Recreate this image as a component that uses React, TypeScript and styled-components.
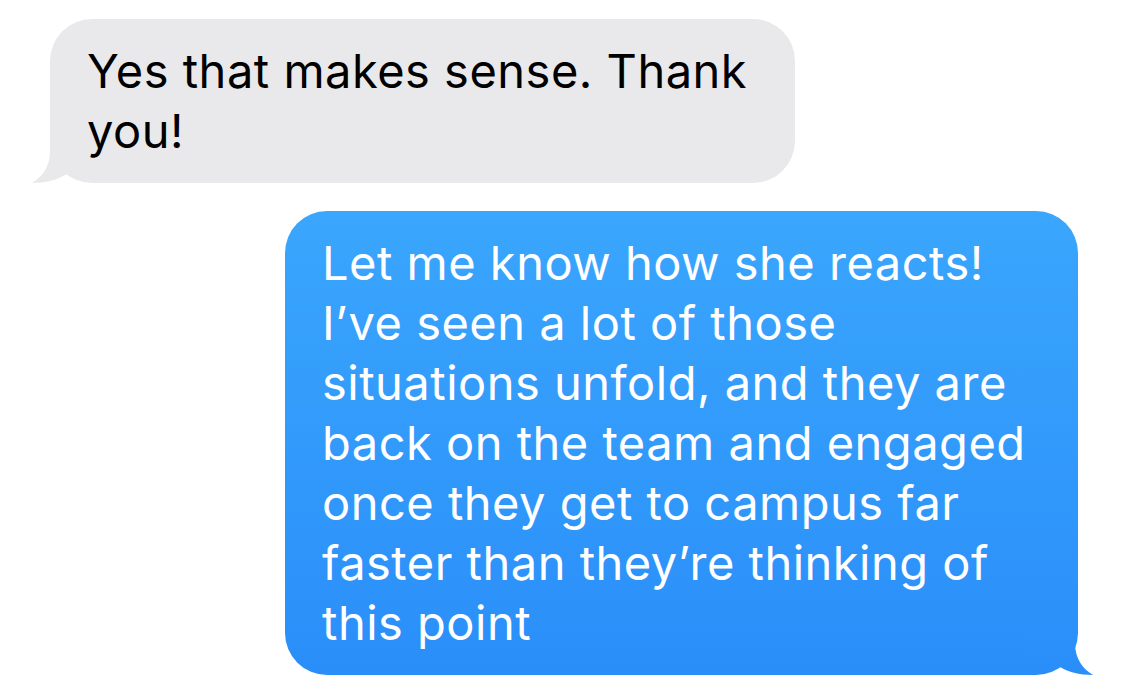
import styled, { createGlobalStyle } from 'styled-components'

const GlobalStyle = createGlobalStyle`
  html, body {
    margin: 0;
    padding: 0;
    background: #ffffff;
  }
  body {
    font-family: Inter, "Noto Sans", "Liberation Sans", sans-serif;
    -webkit-font-smoothing: antialiased;
  }
`

const Thread = styled.div`
  display: flex;
  flex-direction: column;
  gap: 28px;
  padding: 19px 0 0;
  width: 1125px;
`

const Row = styled.div<{ $mine?: boolean }>`
  display: flex;
  justify-content: ${({ $mine }) => ($mine ? 'flex-end' : 'flex-start')};
  padding: ${({ $mine }) => ($mine ? '0 47px 0 0' : '0 0 0 50px')};
`

const Bubble = styled.div<{ $mine?: boolean; $width: number }>`
  position: relative;
  box-sizing: border-box;
  width: ${({ $width }) => $width}px;
  padding: 22px 36px 22px 37px;
  border-radius: 42px;
  font-size: 47px;
  line-height: 60px;
  letter-spacing: 0.5px;
  white-space: nowrap;
  color: ${({ $mine }) => ($mine ? '#ffffff' : '#000000')};
  background: ${({ $mine }) =>
    $mine ? 'linear-gradient(180deg, #3aa6fd 0%, #2a8ef9 100%)' : '#e9e9eb'};
`

const Text = styled.span`
  position: relative;
  z-index: 1;
`

const Tail = styled.svg<{ $mine?: boolean }>`
  position: absolute;
  bottom: 0;
  width: 70px;
  height: 50px;
  ${({ $mine }) => ($mine ? 'right: -15px; transform: scaleX(-1);' : 'left: -18px;')}
`

const TailShape = ({ id, mine, top, bottom }: { id: string; mine?: boolean; top: string; bottom: string }) => (
  <Tail $mine={mine} viewBox="0 0 70 50">
    <defs>
      <linearGradient id={id} x1="0" y1="0" x2="0" y2="1">
        <stop offset="0" stopColor={top} />
        <stop offset="1" stopColor={bottom} />
      </linearGradient>
    </defs>
    <path
      d="M18,0 L18,18 C18,34 10,44 0,50 C14,50 25,47 35,41 C45,47 56,50 70,50 L70,0 Z"
      fill={`url(#${id})`}
    />
  </Tail>
)

const App = () => {
  return (
    <>
      <GlobalStyle />
      <Thread>
        <Row>
          <Bubble $width={745}>
            <TailShape id="tail-in" top="#e9e9eb" bottom="#e9e9eb" />
            <Text>
              Yes that makes sense. Thank
              <br />
              you!
            </Text>
          </Bubble>
        </Row>
        <Row $mine>
          <Bubble $mine $width={793}>
            <TailShape id="tail-out" mine top="#2c91f9" bottom="#2a8ef9" />
            <Text>
              Let me know how she reacts!
              <br />
              I’ve seen a lot of those
              <br />
              situations unfold, and they are
              <br />
              back on the team and engaged
              <br />
              once they get to campus far
              <br />
              faster than they’re thinking of
              <br />
              this point
            </Text>
          </Bubble>
        </Row>
      </Thread>
    </>
  )
}

export default App
